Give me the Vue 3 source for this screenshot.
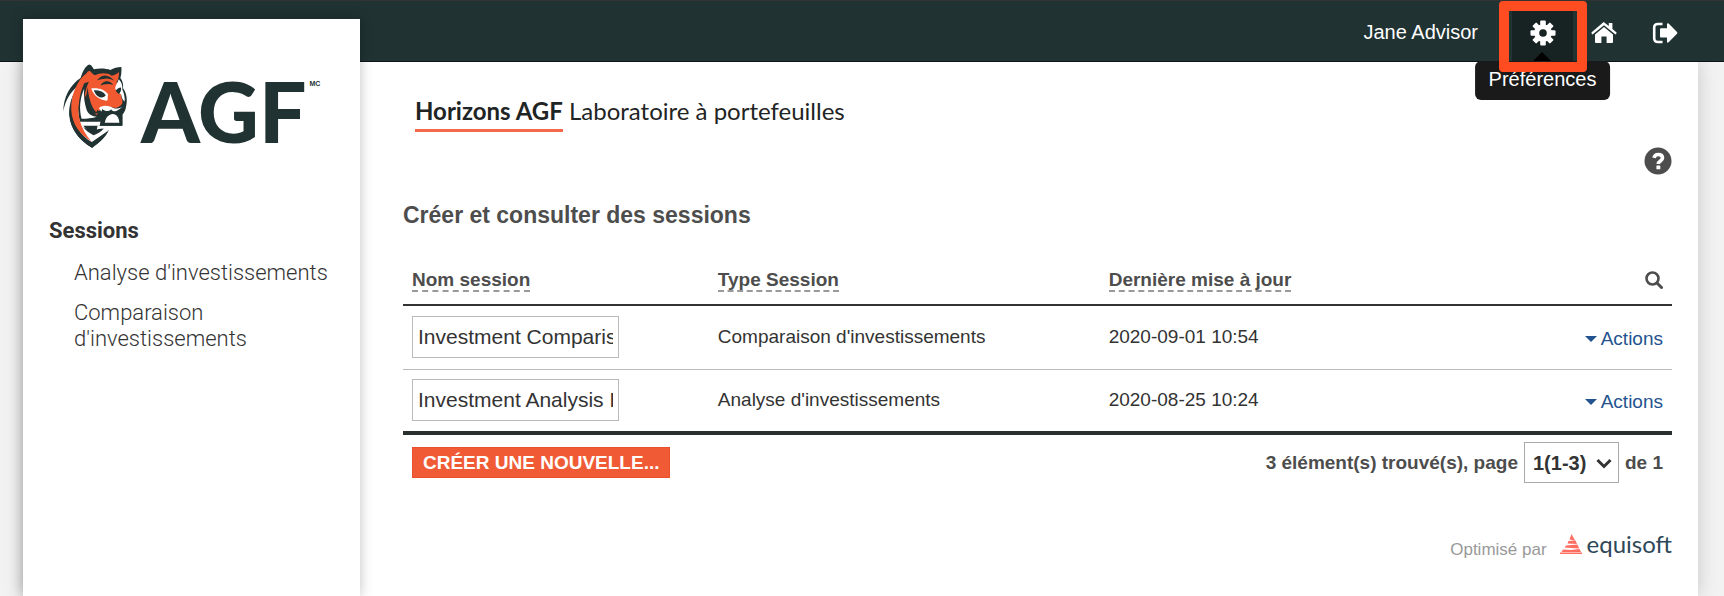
<template>
  <div class="page">
    <header class="topbar">
      <span class="user">Jane Advisor</span>
      <nav class="tools">
        <div class="tool active">
          <button type="button" aria-label="Préférences" aria-describedby="tip">
            <svg width="26" height="26" viewBox="0 0 26 26">
              <g fill="#fff">
                <rect
                  v-for="angle in [0, 45, 90, 135]"
                  :key="angle"
                  x="10.2"
                  y="0.500"
                  width="5.600"
                  height="25"
                  rx="1"
                  :transform="`rotate(${angle} 13 13)`"
                />
                <circle cx="13" cy="13" r="8.800" />
              </g>
              <circle cx="13" cy="13" r="3.800" fill="#172222" />
            </svg>
          </button>
          <span id="tip" class="tooltip" role="tooltip">Préférences</span>
          <span class="marker"></span>
        </div>
        <div class="tool">
          <button type="button" aria-label="Accueil">
            <svg width="26" height="24" viewBox="0 0 26 24" fill="#fff">
              <path d="M4 13.6 13 6l9 7.6V21q0 1-1 1h-5.4v-6.600h-5.200V22H5q-1 0-1-1z" />
              <path d="M13 1.200 17.800 5V2h3.600v6l3.900 3.300q.6.6.1 1.100l-.9 1L13 4.200 1.500 13.400l-.9-1q-.5-.6.1-1.100L11.500 2q1.500-1.400 1.500-.8z" />
            </svg>
          </button>
        </div>
        <div class="tool">
          <button type="button" aria-label="Déconnexion">
            <svg width="26" height="24" viewBox="0 0 26 24">
              <path d="M10.500 3H6Q2.200 3 2.200 6.800v10.400Q2.200 21 6 21h4.500" fill="none" stroke="#fff" stroke-width="2.600" />
              <path d="M8 8.200q0-1 1-1h6V3.200q.2-1.600 1.600-.6l8.400 8.400q.8.900 0 1.800l-8.400 8.500q-1.400 1-1.600-.6v-4.100H9q-1 0-1-1z" fill="#fff" />
            </svg>
          </button>
        </div>
      </nav>
    </header>

    <div class="shell">
      <aside class="sidebar">
        <div class="brand">
          <svg class="tiger" viewBox="189 191 193 253" aria-hidden="true">
            <path fill="#203232" d="M190 334c0-43 20-80 52-101 4-14 14-38 26-41 7 1 10 8 14 15 18-4 36-3 50 2 10-6 21-9 33-9 1 12 0 23-3 33 8 11 9 20 8 31 11 13 14 37 9 56-1 9-5 17-11 24v33h-75l-2 12c12 8 24 7 36 1-8 20-28 37-50 54-38-24-66-56-69-98-2-30 7-63 29-91-27 20-42 48-47 79z" />
            <path fill="#fff" d="M216 302c6-28 18-47 35-62-15 30-20 69-15 103 1 9 3 17 5 22h62l-3 12h-50c10 11 21 16 30 19 17-1 31-4 46-5-7 13-26 27-48 40-40-28-65-69-62-129z" />
            <path fill="#f15a30" d="M260 219c3-6 7-8 10-7 5 3 8 10 15 13 18-9 38-8 51 1 7 0 15-5 22-11 0 13-2 23-8 31 14 13 12 41 18 55 3 12-7 17-17 22-13 0-22-3-31-6-14 2-19 12-30 28-22-16-30-39-30-64-17 28-13 55-2 81-15-21-20-46-16-72-16 49-2 92 32 134-35-21-57-52-60-93-2-42 16-91 46-112z" />
            <path fill="#203232" d="M253 249c-17 35-19 73-12 111l39-2c-17-9-25-24-26-44-2-24 2-45 13-70z" />
            <path fill="#fff" d="M253 265c-13 29-16 61-8 91 17 0 34-1 46-6-17-2-27-10-31-22-5-17-10-37-7-63z" />
            <path fill="#203232" d="M264 262c-8 28-7 54 8 79 9 2 20 0 29-6-24-13-36-40-37-73z" />
            <path fill="#f15a30" d="M270 244c14-12 30-11 49-2 13 7 22 20 31 33 10 13 16 26 14 38-10 10-21 11-33 5-20-5-33 1-42 18-18-20-27-55-19-92z" />
            <path fill="#fff" d="M274 265c21-3 42 3 51 18-2 8 0 13-3 19-25-3-40-15-48-37z" />
            <path fill="#203232" d="M282 270c16-1 29 4 36 15-5 6-11 8-18 6-9-3-14-10-18-21z" />
            <path fill="#fff" d="M346 264c2-9 7-15 11-27 9 8 12 20 11 31 5 10 8 24 7 36-6-4-9-12-11-22-6 0-13-6-18-18z" />
            <path fill="#203232" d="M348 271c5-6 10-9 16-9 1 8-2 15-6 20-5-3-8-7-10-11z" />
            <path fill="#203232" d="M292 240c10-11 17-15 27-14 9 1 17 7 24 15-10-4-18-7-27-6-9 0-15 3-24 5zM302 255c7-9 13-13 20-12 8 0 13 4 18 11-8-3-14-3-19-2-7 0-12 2-19 3z" />
            <path fill="#fff" d="M297 324c10-9 23-9 36-4 10 7 22 7 37 0 3 15-3 24-10 24-13-6-24-9-36-2-11-2-20-7-27-18z" />
            <path fill="#203232" d="M307 326c6 8 17 9 27 1 4 7 14 8 20 3 7-3 11-9 16-12 5 6 5 17-2 23v36h-68c0-10 6-19 14-29-7-5-10-12-7-22z" />
            <path fill="#fff" d="M312 321c8 5 15 4 23 0l-4 9c-9 2-15 0-19-9zM315 368c3-17 13-25 24-26 12 1 19 11 20 26z" />
            <path fill="#203232" d="M250 381c14 7 23 8 31 13 10-7 20-9 31-9-8 10-18 15-31 21-12-7-23-14-31-25z" />
            <path fill="#203232" d="M208 324c8 47 31 83 68 102l49-34c-7 20-28 37-49 51-44-26-70-64-68-119z" />
          </svg>
          <span class="brand-name">AGF</span>
          <span class="brand-mark">MC</span>
        </div>
        <nav class="menu">
          <h2>Sessions</h2>
          <ul>
            <li v-for="item in menu" :key="item">
              <a href="#">{{ item }}</a>
            </li>
          </ul>
        </nav>
      </aside>

      <main class="content">
        <div class="product"><strong>Horizons AGF</strong> Laboratoire à portefeuilles</div>
        <div class="help">
          <button type="button" aria-label="Aide">
            <svg width="28" height="28" viewBox="0 0 28 28">
              <circle cx="14" cy="14" r="13.500" fill="#4d4d4d" />
              <path d="M10 10.800c.5-2.200 2-3.300 4.200-3.300 2.500 0 4.300 1.300 4.300 3.400 0 3.300-4.200 3-4.200 6.200" fill="none" stroke="#fff" stroke-width="3.600" />
              <rect x="12.400" y="18.600" width="3.900" height="3.600" rx=".5" fill="#fff" />
            </svg>
          </button>
        </div>
        <h1>Créer et consulter des sessions</h1>

        <table>
          <colgroup>
            <col class="col-name" />
            <col class="col-type" />
            <col />
            <col class="col-actions" />
          </colgroup>
          <thead>
            <tr>
              <th v-for="title in columns" :key="title" scope="col">
                <a href="#">{{ title }}</a>
              </th>
              <th scope="col">
                <button class="search" type="button" aria-label="Rechercher">
                  <svg width="18" height="18" viewBox="0 0 18 18" fill="none" stroke="#4d4d4d">
                    <circle cx="7.500" cy="7.500" r="6" stroke-width="2.600" />
                    <path d="m12 12 4.500 4.500" stroke-width="3" stroke-linecap="round" />
                  </svg>
                </button>
              </th>
            </tr>
          </thead>
          <tbody>
            <tr v-for="session in sessions" :key="session.id">
              <td><input v-model="session.name" type="text" aria-label="Nom session" /></td>
              <td>{{ session.type }}</td>
              <td>{{ session.updated }}</td>
              <td class="end">
                <button class="actions" type="button"><span class="caret"></span>Actions</button>
              </td>
            </tr>
          </tbody>
        </table>

        <div class="table-footer">
          <button class="create" type="button">CRÉER UNE NOUVELLE...</button>
          <div class="pager">
            <label for="page">3 élément(s) trouvé(s), page</label>
            <span class="select">
              <select id="page" v-model="page">
                <option value="1">1(1-3)</option>
              </select>
              <svg width="16" height="11" viewBox="0 0 16 11">
                <path d="m1.500 2 6.500 6.500L14.500 2" fill="none" stroke="#333" stroke-width="3" />
              </svg>
            </span>
            <span>de 1</span>
          </div>
        </div>

        <footer class="powered">
          <span>Optimisé par</span>
          <a class="equisoft" href="#">
            <svg width="22" height="20" viewBox="0 0 22 20" fill="#ff6f61" aria-hidden="true">
              <path d="M11.500 0 15 6.500 9.500 5.500zM8.500 7l7-.5 1.500 3.500-9.500-.5zM6 11.500l11.500-1 1.700 4-8.200-.5-6.500-.5zM3 15.500l8 .5 8.500-1 1.500 3H1.500zM0 18.500h22V20H0z" />
            </svg>
            equisoft
          </a>
        </footer>
      </main>
    </div>
  </div>
</template>

<script setup>
import { ref } from 'vue'

const menu = ["Analyse d'investissements", "Comparaison d'investissements"]
const columns = ['Nom session', 'Type Session', 'Dernière mise à jour']
const page = ref('1')
const sessions = ref([
  {
    id: 1,
    name: 'Investment Comparison',
    type: "Comparaison d'investissements",
    updated: '2020-09-01 10:54',
  },
  {
    id: 2,
    name: 'Investment Analysis EN',
    type: "Analyse d'investissements",
    updated: '2020-08-25 10:24',
  },
])
</script>

<style>
body {
  margin: 0;
  background: #f2f2f2;
}
</style>

<style scoped>
* {
  box-sizing: border-box;
}
.page {
  display: flex;
  flex-direction: column;
  min-height: 100vh;
  font-family: 'Liberation Sans', Arial, sans-serif;
  font-size: 19px;
  line-height: 24px;
  color: #333;
}
button {
  padding: 0;
  border: 0;
  background: none;
  font: inherit;
  color: inherit;
  cursor: pointer;
}
svg {
  display: block;
}
a {
  color: inherit;
  text-decoration: none;
}

.topbar {
  position: relative;
  display: flex;
  justify-content: flex-end;
  align-items: center;
  gap: 34px;
  height: 62px;
  padding-right: 29px;
  border-top: 1px solid #333;
  border-bottom: 1px solid #0d1515;
  background: #203232;
  z-index: 2;
}
.user {
  padding-top: 2px;
  font-size: 20px;
  color: #fff;
}
.tools {
  display: flex;
  align-self: stretch;
}
.tool {
  position: relative;
  display: flex;
  width: 61px;
}
.tool > button {
  display: flex;
  flex: 1;
  justify-content: center;
  align-items: center;
  padding-top: 4px;
}
.tool.active {
  background: #172222;
}
.tooltip {
  position: absolute;
  top: 60px;
  left: 50%;
  padding: 6px 14px 9px;
  border-radius: 6px;
  background: #1a1a1a;
  color: #fff;
  font-size: 20px;
  transform: translateX(-50%);
}
.tooltip::before {
  content: '';
  position: absolute;
  bottom: 100%;
  left: 50%;
  margin-left: -9px;
  border: 9px solid transparent;
  border-top: 0;
  border-bottom-color: #000;
}
.marker {
  position: absolute;
  top: 0;
  left: -13px;
  width: 88px;
  height: 71px;
  border: 10px solid #ff4d21;
  border-radius: 4px;
  pointer-events: none;
}

.shell {
  display: flex;
  flex: 1;
  margin: 0 26px 0 23px;
  background: #fff;
  box-shadow: 0 0 18px rgba(0, 0, 0, 0.18);
}
.sidebar {
  position: relative;
  z-index: 3;
  flex: 0 0 337px;
  margin-top: -43px;
  background: #fff;
  box-shadow: 0 0 12px rgba(0, 0, 0, 0.25);
}
.brand {
  display: flex;
  align-items: flex-start;
  padding: 45px 0 0 40px;
}
.tiger {
  width: 64px;
  height: 84px;
}
.brand-name {
  margin-left: 14px;
  font-family: Lato, sans-serif;
  font-size: 84px;
  font-weight: 900;
  line-height: 94px;
  color: #203232;
}
.brand-mark {
  margin: 16px 0 0 3px;
  font-size: 7px;
  font-weight: bold;
  line-height: 8px;
  color: #203232;
}
.menu {
  padding: 60px 24px 0 26px;
  font-family: Roboto, sans-serif;
  font-size: 22px;
  line-height: 26px;
}
.menu h2 {
  margin: 0 0 16px;
  font-size: 22px;
}
.menu ul {
  margin: 0;
  padding: 0 0 0 25px;
  list-style: none;
}
.menu li {
  margin-bottom: 14px;
  font-weight: 300;
}

.content {
  flex: 1;
  padding: 35px 26px 24px 43px;
}
.product {
  padding-left: 12px;
  font-family: Lato, sans-serif;
  font-size: 24px;
  line-height: 28px;
  color: #1f2424;
}
.product strong {
  display: inline-block;
  padding-bottom: 4px;
  border-bottom: 3px solid #f4694a;
  font-weight: 700;
}
.help {
  display: flex;
  justify-content: flex-end;
  margin-top: 15px;
}
h1 {
  margin: 27px 0 24px;
  font-size: 23px;
  line-height: 26px;
  color: #4d4d4d;
}

table {
  width: 100%;
  border-collapse: collapse;
  border-bottom: 4px solid #2a3030;
  table-layout: fixed;
}
.col-name {
  width: 24.1%;
}
.col-type {
  width: 30.8%;
}
.col-actions {
  width: 12%;
}
th,
td {
  height: 64px;
  padding: 0 9px;
  text-align: left;
}
th {
  color: #4d4d4d;
}
th a {
  border-bottom: 2px dashed #999;
}
thead {
  border-bottom: 2px solid #333;
}
thead th {
  height: 53px;
  padding-top: 4px;
}
tbody tr + tr {
  border-top: 1px solid #bbb;
}
.end {
  text-align: right;
}
.search {
  display: block;
  margin-left: auto;
}
td input {
  display: block;
  width: 207px;
  height: 42px;
  padding: 0 5px;
  border: 1px solid #bbb;
  font: inherit;
  font-size: 21px;
  color: #333;
}
.actions {
  display: inline-flex;
  align-items: center;
  gap: 4px;
  color: #23538f;
}
.caret {
  border: 6px solid transparent;
  border-top-color: #23538f;
  border-bottom: 0;
}

.table-footer {
  display: flex;
  justify-content: space-between;
  align-items: flex-start;
  padding: 7px 9px 0;
}
.create {
  margin-top: 5px;
  padding: 0 10px;
  border: 1px solid #e9502d;
  background: #f05b36;
  font-weight: bold;
  line-height: 29px;
  color: #fff;
}
.pager {
  display: flex;
  align-items: center;
  gap: 6px;
  font-weight: bold;
  color: #4d4d4d;
}
.select {
  position: relative;
}
.select select {
  display: block;
  width: 95px;
  height: 41px;
  padding: 0 0 0 8px;
  border: 1px solid #aaa;
  border-radius: 0;
  background: #fff;
  appearance: none;
  font: inherit;
  font-size: 20px;
  color: #333;
}
.select svg {
  position: absolute;
  top: 16px;
  right: 7px;
  pointer-events: none;
}
.powered {
  display: flex;
  justify-content: flex-end;
  align-items: flex-end;
  gap: 13px;
  margin-top: 47px;
  font-size: 17px;
  color: #999;
}
.equisoft {
  display: flex;
  align-items: center;
  gap: 5px;
  padding-bottom: 4px;
  font-family: Lato, sans-serif;
  font-size: 24px;
  line-height: 28px;
  color: #2f4858;
}
</style>
